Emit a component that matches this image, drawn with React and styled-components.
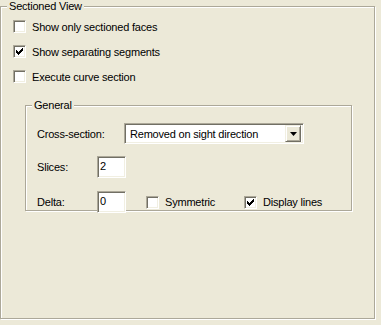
import styled, { createGlobalStyle } from 'styled-components';

const GlobalStyle = createGlobalStyle`
  html, body {
    margin: 0;
    padding: 0;
    background: #ece9d8;
  }
  body {
    font-family: "Liberation Sans", Arial, sans-serif;
    font-size: 11px;
    letter-spacing: -0.2px;
    color: #000;
  }
`;

const Page = styled.div`
  width: 381px;
  height: 325px;
  background: #ece9d8;
  overflow: hidden;
`;

const Group = styled.fieldset`
  box-sizing: border-box;
  margin: ${(p) => p.$margin || '0'};
  width: ${(p) => p.$width}px;
  height: ${(p) => p.$height}px;
  padding: ${(p) => p.$top}px 0 0 0;
  border: 1px solid #aca899;
  box-shadow: inset 1px 1px 0 #fff, 1px 1px 0 #fff;
  min-width: 0;
`;

const Legend = styled.legend`
  padding: 0 2px;
  margin-left: 6px;
  line-height: 13px;
  background: #ece9d8;
`;

const Stack = styled.div`
  display: flex;
  flex-direction: column;
  padding-left: 12px;
`;

const CheckRow = styled.label`
  display: flex;
  align-items: center;
  gap: 6px;
  height: 25px;
  width: ${(p) => (p.$w ? `${p.$w}px` : 'auto')};
  margin-left: ${(p) => p.$indent || 0}px;
  white-space: nowrap;
  flex: none;
`;

const Box = styled.span`
  box-sizing: border-box;
  display: inline-flex;
  align-items: center;
  justify-content: center;
  width: 13px;
  height: 13px;
  background: #fff;
  border-top: 1px solid #aca899;
  border-left: 1px solid #aca899;
  border-right: 1px solid #fff;
  border-bottom: 1px solid #fff;
  box-shadow: inset 1px 1px 0 #716f64, inset -1px -1px 0 #f1efe2;
  flex: none;
`;

const Check = ({ checked }) => (
  <Box>
    {checked && (
      <svg width="7" height="7" viewBox="0 0 7 7">
        <path d="M0 2h1v1h1v1h1V3h1V2h1V1h1V0h1v3H6v1H5v1H4v1H3v1H2V6H1V5H0z" fill="#000" />
      </svg>
    )}
  </Box>
);

const Form = styled.div`
  display: flex;
  flex-direction: column;
  padding-left: 11px;
`;

const Row = styled.div`
  display: flex;
  align-items: center;
  height: ${(p) => p.$h}px;
  margin-bottom: ${(p) => p.$gap || 0}px;
`;

const Label = styled.span`
  width: ${(p) => p.$w}px;
  flex: none;
`;

const Sunken = styled.div`
  box-sizing: border-box;
  display: flex;
  align-items: center;
  width: ${(p) => p.$w}px;
  height: ${(p) => p.$h}px;
  background: #fff;
  border-top: 1px solid #aca899;
  border-left: 1px solid #aca899;
  border-right: 1px solid #fff;
  border-bottom: 1px solid #fff;
  box-shadow: inset 1px 1px 0 #716f64, inset -1px -1px 0 #f1efe2;
  padding: 0 2px 0 3px;
  flex: none;
`;

const Field = styled(Sunken)`
  align-items: flex-start;
  padding: 3px 2px 0 2px;
  line-height: 13px;
`;

const ComboText = styled.span`
  flex: 1;
  padding-left: 2px;
  white-space: nowrap;
`;

const ArrowButton = styled.span`
  box-sizing: border-box;
  display: flex;
  align-items: center;
  justify-content: center;
  width: 16px;
  height: 17px;
  background: #ece9d8;
  border-top: 1px solid #f1efe2;
  border-left: 1px solid #f1efe2;
  border-right: 1px solid #716f64;
  border-bottom: 1px solid #716f64;
  box-shadow: inset 1px 1px 0 #fff, inset -1px -1px 0 #aca899;
`;

const App = () => (
  <Page>
    <GlobalStyle />
    <Group $width={375} $height={319} $top={1}>
      <Legend>Sectioned View</Legend>
      <Stack>
        <CheckRow>
          <Check />
          Show only sectioned faces
        </CheckRow>
        <CheckRow>
          <Check checked />
          Show separating segments
        </CheckRow>
        <CheckRow>
          <Check />
          Execute curve section
        </CheckRow>
      </Stack>
      <Group $width={327} $height={112} $margin="10px 0 0 24px" $top={11}>
        <Legend>General</Legend>
        <Form>
          <Row $h={21} $gap={12}>
            <Label $w={87}>Cross-section:</Label>
            <Sunken $w={180} $h={21}>
              <ComboText>Removed on sight direction</ComboText>
              <ArrowButton>
                <svg width="7" height="4" viewBox="0 0 7 4">
                  <path d="M0 0h7L3.5 4z" fill="#000" />
                </svg>
              </ArrowButton>
            </Sunken>
          </Row>
          <Row $h={22} $gap={13}>
            <Label $w={60}>Slices:</Label>
            <Field $w={29} $h={22}>2</Field>
          </Row>
          <Row $h={22}>
            <Label $w={60}>Delta:</Label>
            <Field $w={29} $h={22}>0</Field>
            <CheckRow $indent={20} $w={98}>
              <Check />
              Symmetric
            </CheckRow>
            <CheckRow>
              <Check checked />
              Display lines
            </CheckRow>
          </Row>
        </Form>
      </Group>
    </Group>
  </Page>
);

export default App;
